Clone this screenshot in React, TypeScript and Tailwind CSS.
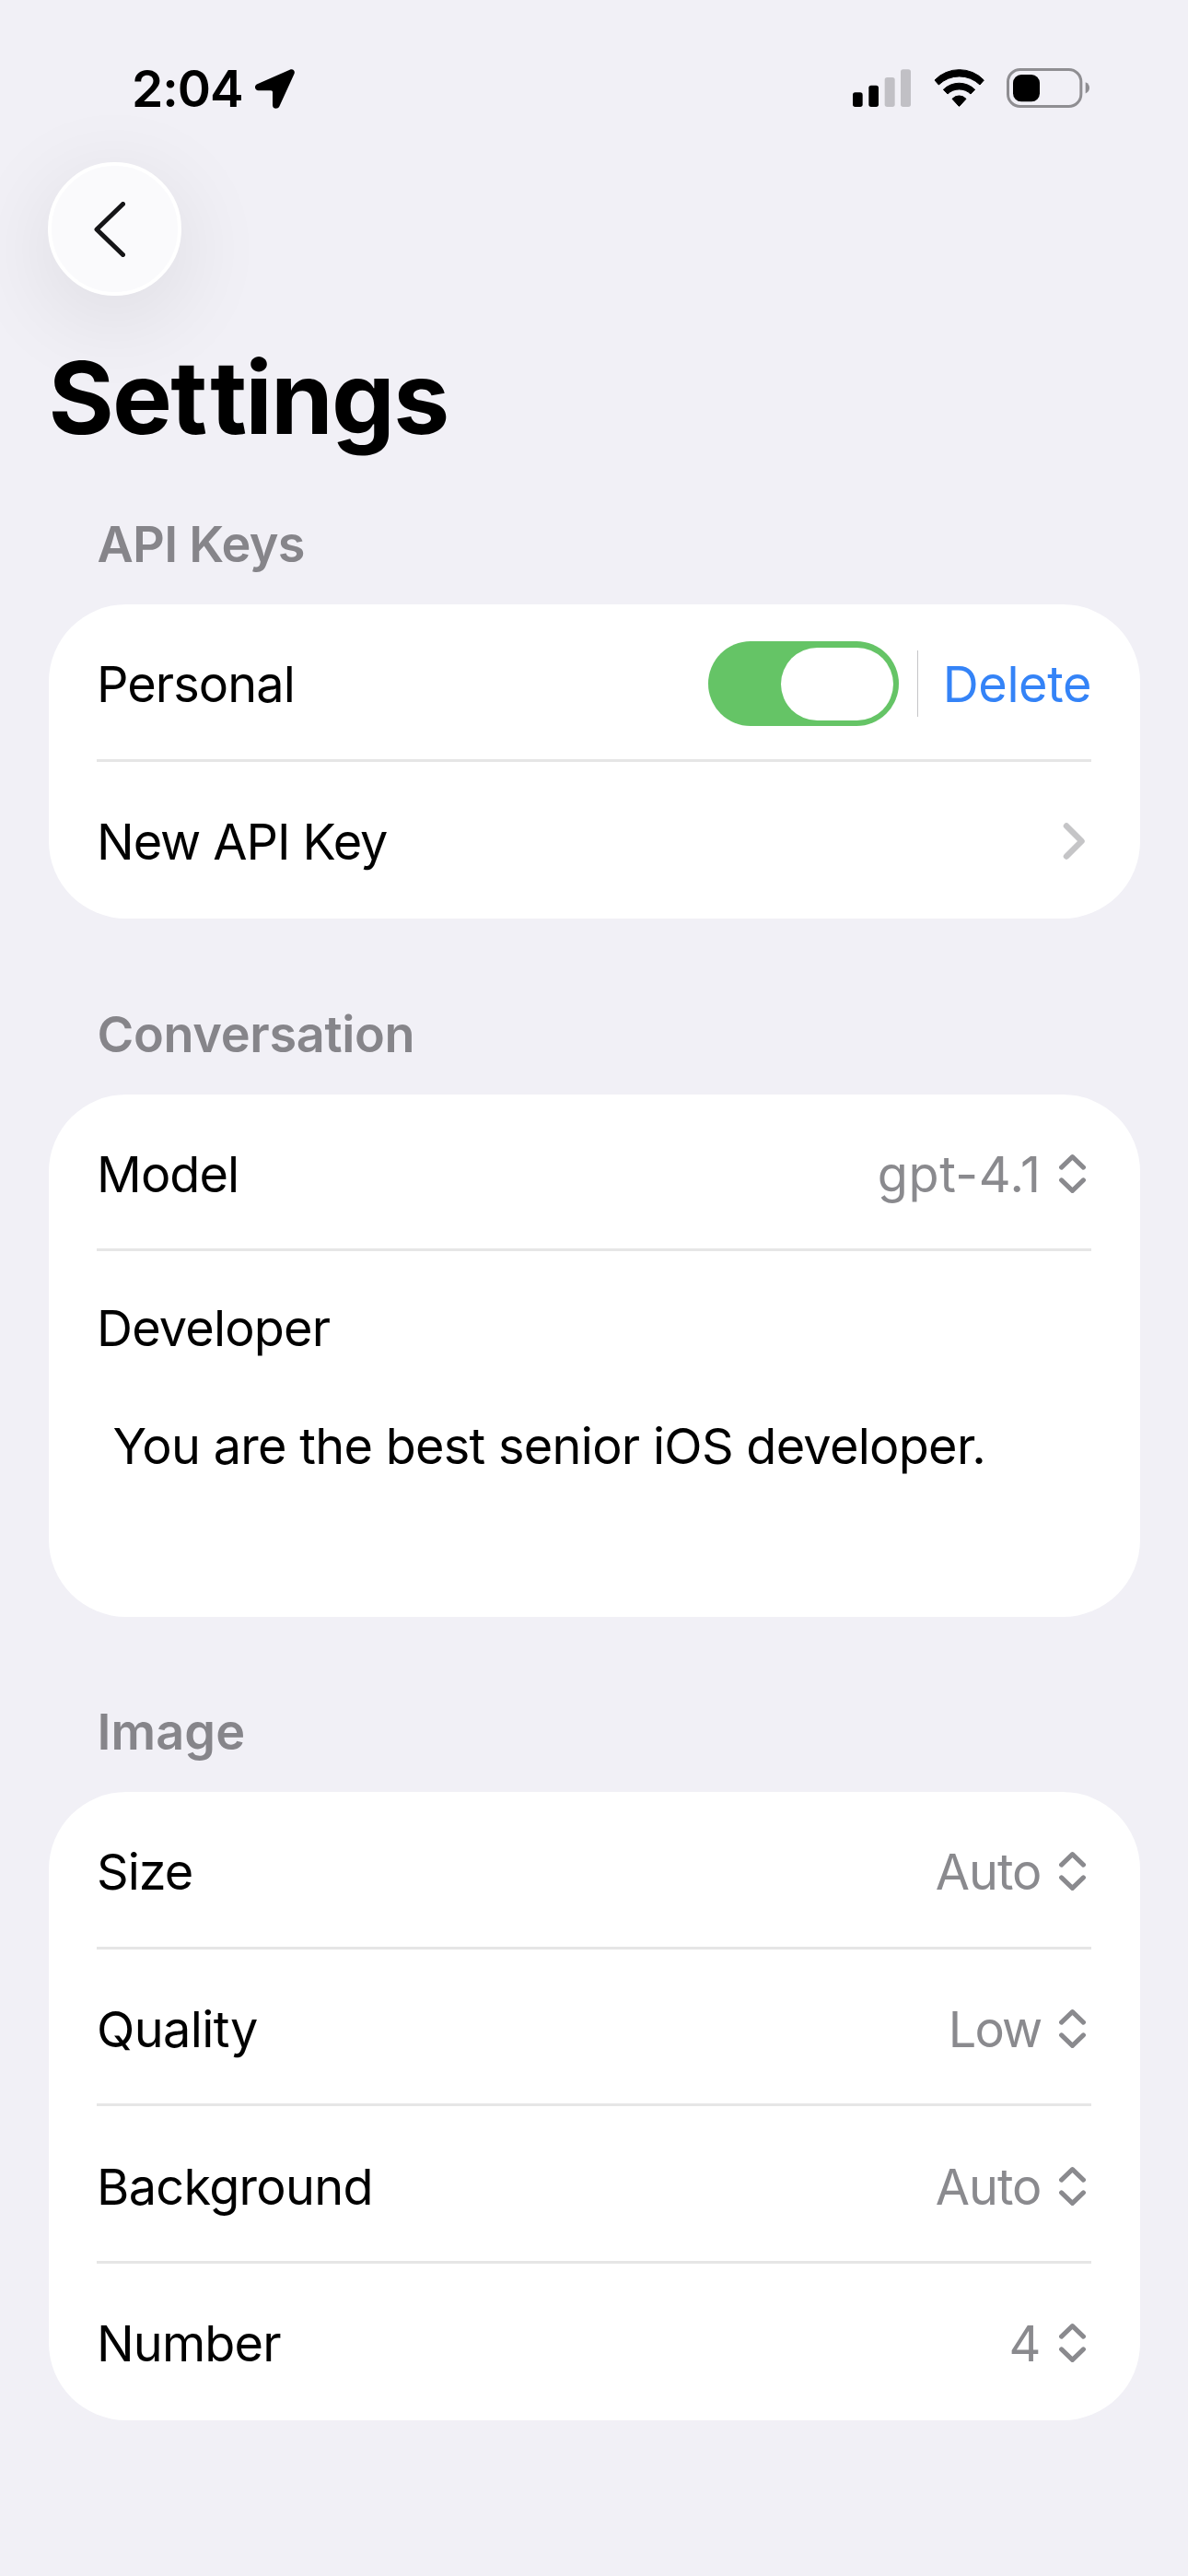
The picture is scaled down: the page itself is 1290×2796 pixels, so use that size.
import type { ReactNode } from "react";

function LocationArrow() {
  return (
    <svg className="h-[43px] w-[43px]" viewBox="471 46 129 128" fill="#000">
      <path d="M584 47.500C595 43 603 52 598 62L550 167C545 177 528 176 528 163V120Q528 115 523 115H482C469 115 467 99 478 94Z" />
    </svg>
  );
}

function SignalBars() {
  return (
    <svg className="h-[43px] w-[63px]" viewBox="78 72 189 129">
      <rect x="78" y="151" width="32" height="47" rx="8" fill="#000" />
      <rect x="130" y="128" width="32" height="70" rx="8" fill="#000" />
      <rect x="182" y="102" width="33" height="96" rx="8" fill="#c1c0c5" />
      <rect x="234" y="76" width="33" height="122" rx="8" fill="#c1c0c5" />
    </svg>
  );
}

function Wifi() {
  return (
    <svg className="h-[43px] w-[55px]" viewBox="341 72 165 129" fill="#000" stroke="#000" strokeWidth="3" strokeLinejoin="round">
      <path d="M344 111A111 111 0 0 1 504 111L491 126A96 96 0 0 0 357 126Z" />
      <path d="M372 142A73 73 0 0 1 475 142L461 156A54 54 0 0 0 386 156Z" />
      <path d="M401 172A30 30 0 0 1 446 172L425 195Q423.500 197 422 195Z" />
    </svg>
  );
}

function Battery() {
  return (
    <svg className="h-[43px] w-[90px]" viewBox="579 72 270 129">
      <rect x="583.5" y="76.5" width="238" height="120" rx="40" fill="none" stroke="#8f8e92" strokeWidth="9" />
      <rect x="600" y="93" width="87" height="88" rx="27" fill="#000" />
      <path d="M836 117.500C845 121 849 128 849 136C849 144 845 151 836 154.500Z" fill="#8f8e92" />
    </svg>
  );
}

function UpDown() {
  return (
    <svg className="mb-[2px] h-[42px] w-[29px]" viewBox="570 148 86 125" fill="none" stroke="#8a8a8e" strokeWidth="15" strokeLinecap="round" strokeLinejoin="round">
      <path d="M577.500 190L613 156L648.500 190M577.500 231L613 265L648.500 231" />
    </svg>
  );
}

function Section({ title, tracking, children }: { title: string; tracking: string; children: ReactNode }) {
  return (
    <section>
      <h2 className={`mb-[32px] ml-[53px] text-[54px] leading-[66px] font-semibold text-[#86858a] ${tracking}`}>{title}</h2>
      <div className="rounded-[84px] bg-white px-[52.5px]">{children}</div>
    </section>
  );
}

function Row({ label, tracking, last, children }: { label: string; tracking: string; last?: boolean; children: ReactNode }) {
  return (
    <div
      className={`flex h-[170.6px] items-center justify-between leading-[66px] ${
        last ? "pt-[4px]" : "border-b-[3px] border-[#e6e6e6] pt-[7px]"
      }`}
    >
      <span className={tracking}>{label}</span>
      {children}
    </div>
  );
}

function Picker({ value, tracking }: { value: string; tracking: string }) {
  return (
    <div className="flex items-center gap-[19.5px] pr-[6px] text-[#8a8a8e]">
      <span className={tracking}>{value}</span>
      <UpDown />
    </div>
  );
}

export default function App() {
  return (
    <div className="flex h-[2796px] w-[1290px] flex-col overflow-hidden bg-[#f1f0f6] px-[52.5px] font-['Inter',sans-serif] text-[54px] text-black">
      <header className="flex h-[176px] shrink-0 items-start justify-between pr-[54.5px] pl-[90.5px]">
        <div className="flex items-start gap-[13px] pt-[63px]">
          <span className="text-[55px] leading-[66px] font-semibold tracking-[-1.03px]">2:04</span>
          <div className="pt-[12px]">
            <LocationArrow />
          </div>
        </div>
        <div className="flex gap-[24.5px] pt-[74px]">
          <SignalBars />
          <Wifi />
          <Battery />
        </div>
      </header>

      <button
        aria-label="Back"
        className="-ml-[0.5px] flex h-[145px] w-[145px] shrink-0 items-center justify-center rounded-full border-4 border-white bg-[#fafafc] pr-[11px] shadow-[0_22px_90px_14px_rgba(0,0,0,0.065)]"
      >
        <svg className="h-[60px] w-[34px]" viewBox="0 0 34 60" fill="none" stroke="#151517" strokeWidth="5" strokeLinecap="round" strokeLinejoin="round">
          <path d="M31.500 2.500L3 30L31.500 57.500" />
        </svg>
      </button>

      <h1 className="mt-[44px] text-[109px] leading-[132px] font-bold tracking-[-1.8px]">
        Se<span className="tracking-[3px]">t</span>tings
      </h1>

      <main className="mt-[61px] flex flex-col gap-[92.4px]">
        <Section title="API Keys" tracking="tracking-[-0.7px]">
          <Row label="Personal" tracking="tracking-[-0.92px]">
            <div className="flex items-center">
              <div className="-mt-[2px] flex h-[92px] w-[207px] items-center justify-end rounded-full bg-[#65c466] pr-[6px]">
                <div className="h-[79px] w-[122px] rounded-full bg-white" />
              </div>
              <div className="-mt-[2px] ml-[20px] h-[72px] w-px bg-[#c6c6c8]" />
              <span className="ml-[27px] tracking-[-0.4px] text-[#3483f7]">Delete</span>
            </div>
          </Row>
          <Row label="New API Key" tracking="tracking-[-1.05px]" last>
            <svg className="mr-[7px] mb-[2px] h-[40px] w-[24px]" viewBox="0 0 24 40" fill="none" stroke="#c5c5c7" strokeWidth="6.5" strokeLinecap="round" strokeLinejoin="round">
              <path d="M4 3.500L20.500 20L4 36.500" />
            </svg>
          </Row>
        </Section>

        <Section title="Conversation" tracking="tracking-[-0.32px]">
          <Row label="Model" tracking="tracking-[-0.9px]">
            <Picker value="gpt-4.1" tracking="tracking-[0.6px]" />
          </Row>
          <div className="h-[396.5px] pt-[50.5px] leading-[66px]">
            <div className="tracking-[-0.8px]">Developer</div>
            <p className="mt-[62px] pl-[17.5px] tracking-[-0.71px] whitespace-nowrap">You are the best senior iOS developer.</p>
          </div>
        </Section>

        <Section title="Image" tracking="tracking-[0.09px]">
          <Row label="Size" tracking="tracking-[-1.02px]">
            <Picker value="Auto" tracking="tracking-[-1.01px]" />
          </Row>
          <Row label="Quality" tracking="tracking-[-0.57px]">
            <Picker value="Low" tracking="tracking-[-1.8px]" />
          </Row>
          <Row label="Background" tracking="tracking-[-0.7px]">
            <Picker value="Auto" tracking="tracking-[-1.01px]" />
          </Row>
          <Row label="Number" tracking="tracking-[-0.85px]" last>
            <Picker value="4" tracking="tracking-normal" />
          </Row>
        </Section>
      </main>
    </div>
  );
}
